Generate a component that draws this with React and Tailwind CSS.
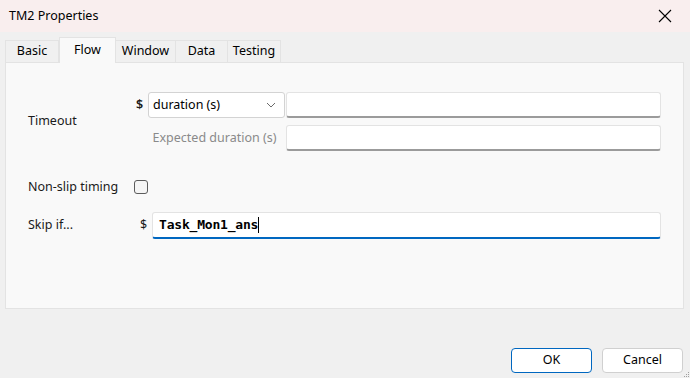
import React from 'react';

const font = { fontFamily: '"Noto Sans", "Open Sans", sans-serif' };

const tabs = ['Basic', 'Flow', 'Window', 'Data', 'Testing'];
const tabWidths = { Basic: 'w-[54px]', Flow: 'w-[57px]', Window: 'w-[61px]', Data: 'w-[53px]', Testing: 'w-[54px]' };

const TextBox = ({ className = '', children }) => (
  <div className={`h-[26px] bg-white rounded-[3px] border border-[#e3e3e3] border-b-[2px] border-b-[#9b9b9b] ${className}`}>
    {children}
  </div>
);

export default function App() {
  return (
    <div className="w-[690px] h-[378px] bg-[#f0f0f0] flex flex-col text-[12px] text-[#1a1a1a] overflow-hidden relative" style={font}>
      {/* title bar */}
      <div className="h-[32px] bg-[#f9eeee] flex items-center justify-between pl-[9px] pr-[18px] shrink-0">
        <span className="text-[12.5px] text-black">TM2 Properties</span>
        <svg width="14" height="14" viewBox="0 0 14 14" className="text-black">
          <path d="M1 1 L13 13 M13 1 L1 13" stroke="currentColor" strokeWidth="1.1" fill="none" />
        </svg>
      </div>

      {/* tabs */}
      <div className="flex items-end h-[25px] mt-[5px] ml-[5px] relative z-10">
        {tabs.map(t => (
          t === 'Flow' ? (
            <div key={t} className={`${tabWidths[t]} h-[26px] -mb-px bg-[#f9f9f9] border border-[#e3e3e3] border-b-0 flex items-start justify-center pt-[3px] text-[12.5px] text-black`}>
              {t}
            </div>
          ) : (
            <div key={t} className={`${tabWidths[t]} h-[22px] bg-[#f0f0f0] border border-[#e3e3e3] border-b-0 -ml-px first:ml-0 flex items-center justify-center text-[12.5px] text-black`}>
              {t}
            </div>
          )
        ))}
      </div>

      {/* panel */}
      <div className="ml-[5px] w-[679px] h-[247px] bg-[#f9f9f9] border border-[#e3e3e3] flex flex-col pt-[29px] pl-[22px]">
        {/* Timeout */}
        <div className="flex items-center">
          <div className="w-[106px] text-[12.5px]">Timeout</div>
          <div className="flex flex-col gap-[7px]">
            <div className="flex items-center">
              <span className="w-[14px] pl-[2px] font-semibold text-[12.5px]">$</span>
              <div className="w-[137px] h-[26px] bg-white border border-[#d3d3d3] rounded-[3px] flex items-center justify-between pl-[4px] pr-[8px] text-[12.5px] text-black">
                <span>duration (s)</span>
                <svg width="10" height="6" viewBox="0 0 10 6">
                  <path d="M1 1 L5 5 L9 1" stroke="#6b6b6b" strokeWidth="1" fill="none" />
                </svg>
              </div>
              <TextBox className="w-[375px] ml-px" />
            </div>
            <div className="flex items-center">
              <span className="w-[151px] text-center text-[#8a8a8a] text-[12.5px] pl-[10px]">Expected duration (s)</span>
              <TextBox className="w-[375px] ml-px" />
            </div>
          </div>
        </div>

        {/* Non-slip timing */}
        <div className="flex items-center mt-[27px]">
          <div className="w-[106px] text-[12.5px]">Non-slip timing</div>
          <div className="w-[14px] h-[14px] rounded-[3px] border border-[#5c5c5c] bg-[#f5f5f5]" />
        </div>

        {/* Skip if */}
        <div className="flex items-center mt-[15px]">
          <div className="w-[106px] text-[12.5px]">Skip if...</div>
          <span className="w-[18px] pl-[6px] text-[12.5px]">$</span>
          <div className="w-[509px] h-[27px] bg-white rounded-[3px] border border-[#e3e3e3] border-b-[2px] border-b-[#0067c0] flex items-center pl-[6px]">
            <span className="text-[13px] font-bold text-black tracking-[-0.2px]" style={{ fontFamily: '"DejaVu Sans Mono", "Liberation Mono", monospace' }}>Task_Mon1_ans</span>
            <span className="w-px h-[16px] bg-black" />
          </div>
        </div>
      </div>

      {/* buttons */}
      <div className="flex justify-end gap-[10px] pr-[7px] mt-[39px]">
        <button className="w-[81px] h-[25px] bg-white border border-[#0067c0] rounded-[4px] text-[12.5px] text-black">OK</button>
        <button className="w-[81px] h-[25px] bg-white border border-[#d0d0d0] rounded-[4px] text-[12.5px] text-black">Cancel</button>
      </div>

      {/* resize grip */}
      <svg width="6" height="6" viewBox="0 0 6 6" className="absolute right-0 bottom-0">
        <rect x="4" y="0" width="1" height="1" fill="#a0a0a0" />
        <rect x="2" y="2" width="1" height="1" fill="#a0a0a0" />
        <rect x="4" y="2" width="1" height="1" fill="#a0a0a0" />
        <rect x="0" y="4" width="1" height="1" fill="#a0a0a0" />
        <rect x="2" y="4" width="1" height="1" fill="#a0a0a0" />
        <rect x="4" y="4" width="1" height="1" fill="#a0a0a0" />
      </svg>
    </div>
  );
}
